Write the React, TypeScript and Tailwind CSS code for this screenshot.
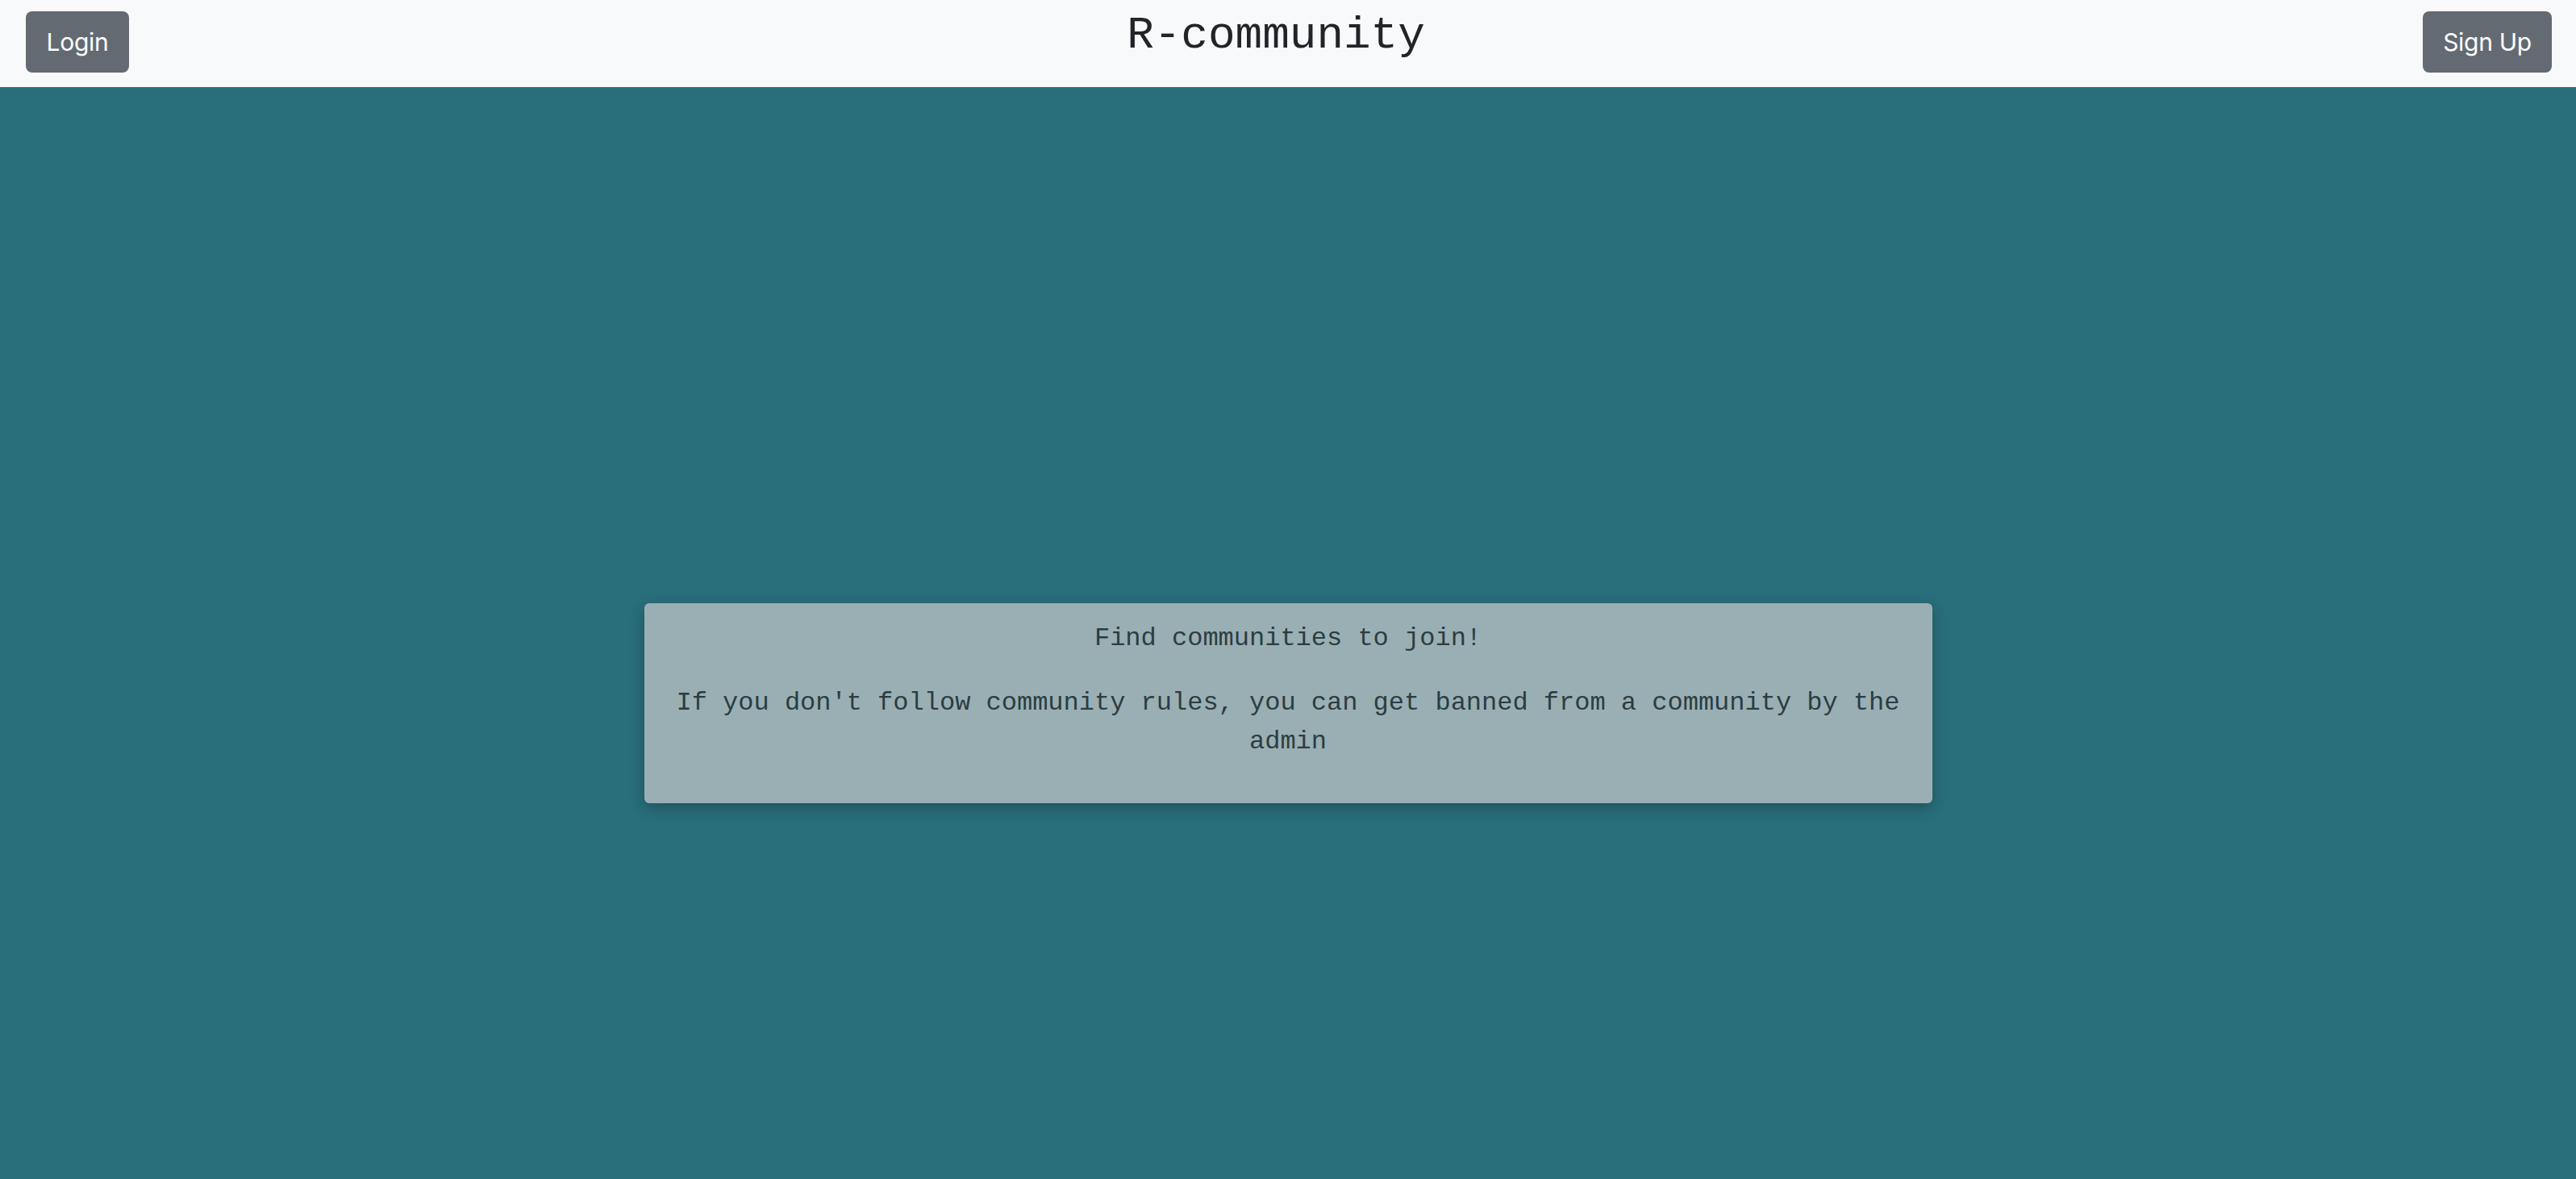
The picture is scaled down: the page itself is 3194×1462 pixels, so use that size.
import React from "react";

export default function App() {
  return (
    <div className="min-h-screen flex flex-col bg-[#296e7b]">
      <header className="h-[108px] shrink-0 bg-[#f8f9fa] flex items-start justify-between pl-[32px] pr-[30px] pt-[14px]">
        <button className="w-[128px] h-[76px] rounded-[8px] bg-[#646a72] text-white text-[30px] tracking-[-0.3px] font-['Inter',sans-serif] flex items-center justify-center">
          Login
        </button>
        <h1 className="mt-[-2px] text-[56px] leading-[64px] text-[#212529] font-['Liberation_Mono','Courier_New',monospace] font-normal">
          R-community
        </h1>
        <button className="w-[160px] h-[76px] rounded-[8px] bg-[#646a72] text-white text-[30px] tracking-[-0.3px] font-['Inter',sans-serif] flex items-center justify-center">
          Sign Up
        </button>
      </header>
      <main className="flex-1 flex flex-col items-center pt-[640px]">
        <div className="w-1/2 bg-[#9aafb4] rounded-[6px] shadow-[0_6px_18px_rgba(0,0,0,0.25)] px-[24px] pt-[20px] pb-[20px] text-center text-[32px] leading-[48px] text-[#2b3d42] font-['Liberation_Mono','Courier_New',monospace]">
          <p className="mb-[32px]">Find communities to join!</p>
          <p className="mb-[32px]">
            If you don't follow community rules, you can get banned from a community by the admin
          </p>
        </div>
      </main>
    </div>
  );
}
